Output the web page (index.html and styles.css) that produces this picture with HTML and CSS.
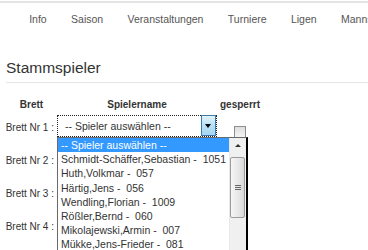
FILE: index.html
```html
<!DOCTYPE html>
<html lang="de">
<head>
  <meta charset="UTF-8">
  <title>Stammspieler</title>
  <link rel="stylesheet" href="styles.css">
</head>
<body>
  <div class="topbar"></div>
  <nav class="nav">
    <a href="#">Info</a>
    <a href="#">Saison</a>
    <a href="#">Veranstaltungen</a>
    <a href="#">Turniere</a>
    <a href="#">Ligen</a>
    <a href="#">Mannschaften</a>
  </nav>

  <div class="content">
    <h2 class="title">Stammspieler</h2>

    <div class="roster">
      <div class="head">Brett</div>
      <div class="head">Spielername</div>
      <div class="head">gesperrt</div>

      <div class="brett">Brett Nr 1 :</div>
      <div class="pick">
        <div class="select focused">
          <span class="select-text">-- Spieler auswählen --</span>
          <span class="arrow"></span>
        </div>
        <div class="dropdown">
          <ul class="options">
            <li class="active">-- Spieler auswählen --</li>
            <li>Schmidt-Schäffer,Sebastian -&nbsp; 1051</li>
            <li>Huth,Volkmar -&nbsp; 057</li>
            <li>Härtig,Jens -&nbsp; 056</li>
            <li>Wendling,Florian -&nbsp; 1009</li>
            <li>Rößler,Bernd -&nbsp; 060</li>
            <li>Mikolajewski,Armin -&nbsp; 007</li>
            <li>Mükke,Jens-Frieder -&nbsp; 081</li>
            <li>Bauer,Thomas -&nbsp; 012</li>
          </ul>
          <div class="scrollbar">
            <span class="scroll-up"></span>
            <span class="thumb"><i></i><i></i><i></i></span>
          </div>
        </div>
      </div>
      <div class="lock"><span class="box"></span></div>

      <div class="brett">Brett Nr 2 :</div>
      <div class="pick"><div class="select"></div></div>
      <div class="lock"><span class="box"></span></div>

      <div class="brett">Brett Nr 3 :</div>
      <div class="pick"><div class="select"></div></div>
      <div class="lock"><span class="box"></span></div>

      <div class="brett">Brett Nr 4 :</div>
      <div class="pick"><div class="select"></div></div>
      <div class="lock"><span class="box"></span></div>

      <div class="brett">Brett Nr 5 :</div>
      <div class="pick"><div class="select"></div></div>
      <div class="lock"><span class="box"></span></div>
    </div>
  </div>
</body>
</html>
```

FILE: styles.css
```css
body {
  margin: 0;
  font-family: "Liberation Sans", Arial, sans-serif;
  color: #333;
  background: #fff;
}
.topbar {
  margin-top: 1px;
  border-top: 2px solid #e4e4e4;
}
.nav {
  display: flex;
  padding: 10px 0 0 17px;
  white-space: nowrap;
  overflow: hidden;
}
.nav a {
  padding: 0 12.2px;
  font-size: 10.5px;
  line-height: 13px;
  color: #555;
  text-decoration: none;
}
.content {
  padding-left: 6px;
}
.title {
  margin: 32px 0 0;
  padding-bottom: 4px;
  font-size: 15.5px;
  line-height: 20px;
  font-weight: normal;
  color: #333;
  border-bottom: 1px solid #e6e6e6;
}
.roster {
  display: grid;
  grid-template-columns: 51px 160px 46px;
  grid-template-rows: 14px repeat(5, 33px);
  margin-top: 14px;
}
.head {
  display: flex;
  align-items: flex-end;
  justify-content: center;
  font-size: 10px;
  line-height: 12px;
  font-weight: bold;
  white-space: nowrap;
}
.brett {
  display: flex;
  align-items: center;
  justify-content: flex-end;
  padding-right: 3px;
  font-size: 10px;
  white-space: nowrap;
}
.pick {
  position: relative;
  padding-top: 4px;
}
.select {
  position: relative;
  box-sizing: border-box;
  width: 160px;
  height: 22px;
  border: 1px solid #a9a9a9;
  background: #fff;
  font-size: 10.5px;
  line-height: 20px;
}
.select.focused {
  border: 1px dotted #222;
}
.select-text {
  padding-left: 7px;
  color: #333;
}
.arrow {
  position: absolute;
  right: 0;
  top: -1px;
  box-sizing: border-box;
  width: 15px;
  height: 21px;
  border: 1px solid #3d7bad;
  background: linear-gradient(#e3f4fc, #b7e0f6 50%, #a6d6f2);
}
.arrow::after {
  content: "";
  position: absolute;
  left: 3px;
  top: 8px;
  border-left: 3.5px solid transparent;
  border-right: 3.5px solid transparent;
  border-top: 4px solid #000;
}
.lock {
  display: flex;
  align-items: flex-end;
  justify-content: center;
  padding-bottom: 6px;
}
.box {
  width: 10px;
  height: 10px;
  border: 1px solid #8e8e8e;
  background: linear-gradient(#dedede, #f5f5f5);
}
.dropdown {
  position: absolute;
  left: 0;
  top: 26px;
  display: flex;
  width: 188px;
  height: 126px;
  border: 1px solid #6a6a6a;
  border-right: 2px solid #000;
  background: #fff;
  z-index: 2;
}
.options {
  flex: 1;
  margin: 0;
  padding: 0;
  list-style: none;
  font-size: 10.5px;
  line-height: 14.2px;
  color: #333;
  white-space: nowrap;
  overflow: hidden;
}
.options li {
  padding-left: 3px;
}
.options li.active {
  background: #3399ff;
  color: #fff;
}
.scrollbar {
  position: relative;
  width: 16px;
  background: #f0f0f0;
  border-left: 1px solid #e8e8e8;
}
.scroll-up {
  position: absolute;
  left: 5px;
  top: 6px;
  border-left: 3px solid transparent;
  border-right: 3px solid transparent;
  border-bottom: 3px solid #333;
}
.thumb {
  position: absolute;
  left: 0;
  top: 19px;
  width: 13px;
  height: 59px;
  border: 1px solid #9c9c9c;
  border-radius: 2px;
  background: linear-gradient(90deg, #f6f6f6, #e6e6e6 60%, #d8d8d8);
  display: flex;
  flex-direction: column;
  justify-content: center;
  align-items: center;
  gap: 1px;
}
.thumb i {
  display: block;
  width: 6px;
  height: 1px;
  background: #666;
}
```
